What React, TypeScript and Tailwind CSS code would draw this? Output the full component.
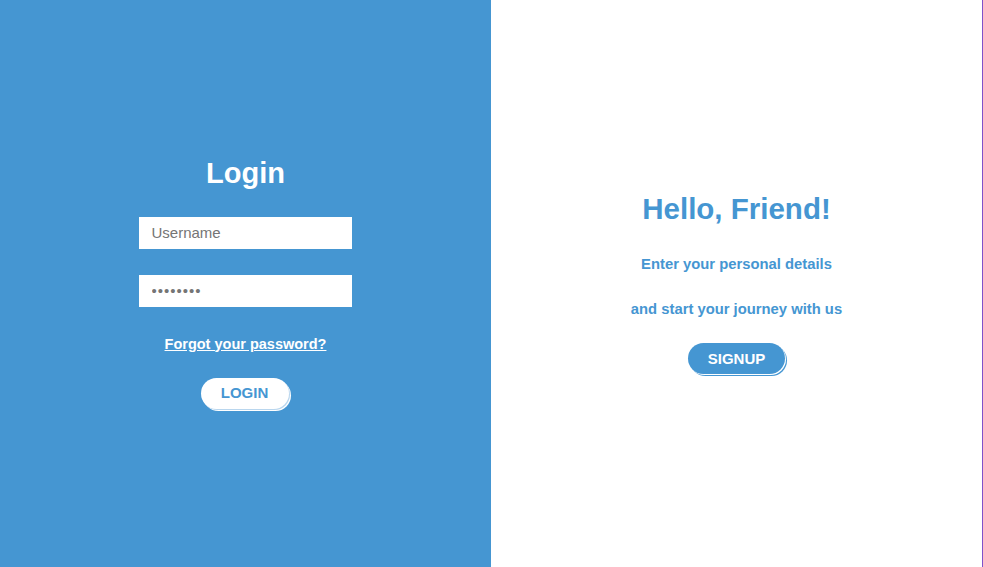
import { useState } from 'react';

export default function App() {
  const [username, setUsername] = useState('');
  const [password, setPassword] = useState('password');

  return (
    <div className="flex h-screen w-full font-['Liberation_Sans',Arial,sans-serif]">
      {/* Login side */}
      <div className="flex w-[491px] flex-col items-center justify-center bg-[#4596d2] pb-[2px]">
        <h1 className="text-[29px] font-bold leading-8 text-white">Login</h1>
        <input
          autoFocus
          value={username}
          onChange={e => setUsername(e.target.value)}
          placeholder="Username"
          className="mt-[28px] mr-[1px] h-8 w-[213px] bg-white px-[13px] text-[15px] text-gray-800 outline-none placeholder:text-[#757575]"
        />
        <input
          type="password"
          value={password}
          onChange={e => setPassword(e.target.value)}
          className="mt-[26px] mr-[1px] h-8 w-[213px] bg-white px-[13px] text-[15px] tracking-[1px] text-[#757575] outline-none"
        />
        <a href="#" className="mt-[27px] text-[14.5px] font-bold leading-5 text-white underline">
          Forgot your password?
        </a>
        <button className="mt-6 mr-[2px] h-[31px] w-[88px] rounded-full bg-white pt-[1px] text-[15px] font-bold text-[#4596d2] shadow-[1px_1px_0_0_#b9d6ee,2px_2px_0_0_#fff]">
          LOGIN
        </button>
      </div>

      {/* Signup side */}
      <div className="flex w-[492px] flex-col items-center justify-center border-r border-[#8052c9] bg-white">
        <h1 className="text-[29.5px] font-bold leading-8 text-[#4596d2]">Hello, Friend!</h1>
        <p className="mt-[29px] text-[14.8px] font-bold leading-5 text-[#4596d2]">Enter your personal details</p>
        <p className="mt-[25px] text-[14.8px] font-bold leading-5 text-[#4596d2]">and start your journey with us</p>
        <button className="mt-6 h-[31px] w-[97px] rounded-full bg-[#4596d2] pt-[1px] text-[15px] font-bold text-white shadow-[1px_1px_0_0_#fff,2px_2px_0_0_#4596d2]">
          SIGNUP
        </button>
      </div>
    </div>
  );
}
